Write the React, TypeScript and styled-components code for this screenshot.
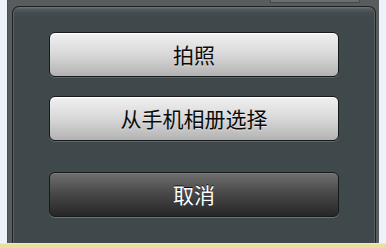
import React from "react";
import styled, { createGlobalStyle, css } from "styled-components";

const Global = createGlobalStyle`
  html, body { margin: 0; padding: 0; background: #eef2fa; }
  body { font-family: "Noto Sans CJK SC", "Noto Sans", sans-serif; }
`;

const Page = styled.div`
  width: 386px;
  height: 248px;
  display: flex;
  flex-direction: column;
  overflow: hidden;
`;

const Backdrop = styled.div`
  flex: 1;
  margin: 0 7px;
  background: #595c5c;
  border-left: 1px solid #4a4d4d;
  display: flex;
  flex-direction: column;
  min-height: 0;
`;

const TopRow = styled.div`
  height: 6px;
  display: flex;
  justify-content: flex-end;
  padding-right: 19px;
`;

const HiddenTab = styled.div`
  width: 88px;
  height: 2px;
  background: #6c6e6e;
  border: 1px solid #464848;
  border-top: none;
`;

const Panel = styled.div`
  flex: 1;
  margin: 0 3px 0 4px;
  border: 1px solid #1c2123;
  border-bottom: none;
  border-radius: 7px 7px 0 0;
  background: linear-gradient(#737a7c 0, #535b5e 2px, #434c4f 6px, #3f484b 10px);
  box-shadow: inset 1px 0 0 #5a6264, inset -1px 0 0 #5a6264;
  padding: 25px 36px 0;
  display: flex;
  flex-direction: column;
  gap: 19px;
`;

const Button = styled.div<{ $dark?: boolean; $spaced?: boolean }>`
  height: 45px;
  box-sizing: border-box;
  border: 1px solid #161a1b;
  border-radius: 6px;
  display: flex;
  align-items: center;
  justify-content: center;
  font-size: 21px;
  line-height: 1;
  ${(p) =>
    p.$dark
      ? css`
          background: linear-gradient(#6f6f6f, #4a4a4a 45%, #262626);
          color: #ffffff;
          text-shadow: 0 -1px 0 #111;
          box-shadow: inset 0 1px 0 #7d7d7d, 0 1px 0 #6a7477;
        `
      : css`
          background: linear-gradient(#f0f0f0, #d8d8d8 50%, #b3b3b3);
          color: #0a0a0a;
          text-shadow: 0 1px 0 rgba(255, 255, 255, 0.5);
          box-shadow: inset 0 1px 0 #ffffff, 0 1px 0 #5e6769;
        `}
  ${(p) =>
    p.$spaced &&
    css`
      margin-top: 12px;
    `}
`;

const Footer = styled.div`
  height: 4px;
  background: #e8df9f;
  border-top: 1px solid #f0ebc0;
`;

export default function App() {
  return (
    <>
      <Global />
      <Page>
        <Backdrop>
          <TopRow>
            <HiddenTab />
          </TopRow>
          <Panel>
            <Button>拍照</Button>
            <Button>从手机相册选择</Button>
            <Button $dark $spaced>
              取消
            </Button>
          </Panel>
        </Backdrop>
        <Footer />
      </Page>
    </>
  );
}
